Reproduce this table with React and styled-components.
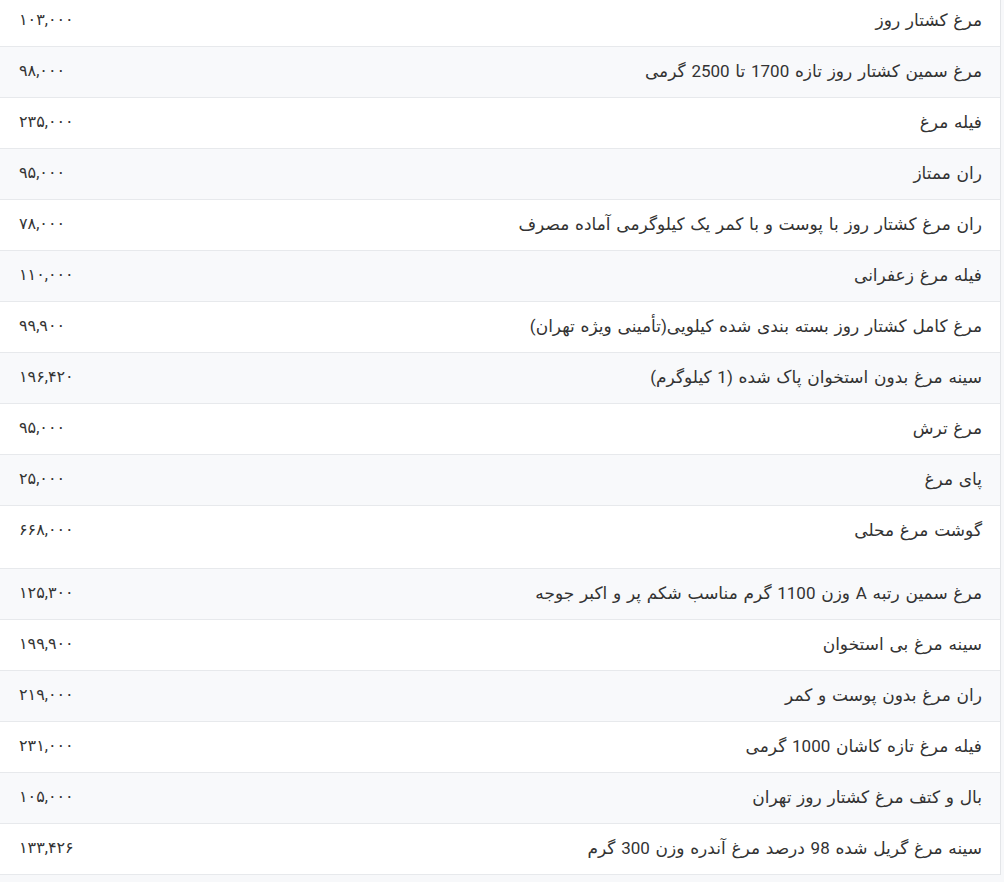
import React from "react";
import styled, { createGlobalStyle } from "styled-components";

const Global = createGlobalStyle`
  html, body { margin: 0; padding: 0; background: #f7f8fa; }
  body { font-family: Roboto, "DejaVu Sans", sans-serif; color: #333; overflow: hidden; }
`;

const Table = styled.div`
  direction: rtl;
  width: 1000px;
  margin-top: -4px;
  border-right: 1px solid #e3e5e8;
  background: #fff;
`;

const Row = styled.div`
  display: flex;
  justify-content: space-between;
  align-items: flex-start;
  height: ${(p) => (p.$tall ? 62 : 50)}px;
  padding: 0 18px 0 19px;
  box-sizing: content-box;
  border-bottom: 1px solid #e7e9ec;
  background: ${(p) => (p.$alt ? "#f8f9fb" : "#fff")};
`;

const Name = styled.span`
  font-size: 17px;
  line-height: 22px;
  word-spacing: 1.5px;
  margin-top: 13px;
  white-space: nowrap;
`;

const Price = styled.span`
  direction: ltr;
  font-size: 16px;
  line-height: 22px;
  margin-top: 13px;
  white-space: nowrap;
`;

const rows = [
  ["مرغ کشتار روز", "۱۰۳,۰۰۰"],
  ["مرغ سمین کشتار روز تازه 1700 تا 2500 گرمی", "۹۸,۰۰۰"],
  ["فیله مرغ", "۲۳۵,۰۰۰"],
  ["ران ممتاز", "۹۵,۰۰۰"],
  ["ران مرغ کشتار روز با پوست و با کمر یک کیلوگرمی آماده مصرف", "۷۸,۰۰۰"],
  ["فیله مرغ زعفرانی", "۱۱۰,۰۰۰"],
  ["مرغ کامل کشتار روز بسته بندی شده کیلویی(تأمینی ویژه تهران)", "۹۹,۹۰۰"],
  ["سینه مرغ بدون استخوان پاک شده (1 کیلوگرم)", "۱۹۶,۴۲۰"],
  ["مرغ ترش", "۹۵,۰۰۰"],
  ["پای مرغ", "۲۵,۰۰۰"],
  ["گوشت مرغ محلی", "۶۶۸,۰۰۰", true],
  ["مرغ سمین رتبه A وزن 1100 گرم مناسب شکم پر و اکبر جوجه", "۱۲۵,۳۰۰"],
  ["سینه مرغ بی استخوان", "۱۹۹,۹۰۰"],
  ["ران مرغ بدون پوست و کمر", "۲۱۹,۰۰۰"],
  ["فیله مرغ تازه کاشان 1000 گرمی", "۲۳۱,۰۰۰"],
  ["بال و کتف مرغ کشتار روز تهران", "۱۰۵,۰۰۰"],
  ["سینه مرغ گریل شده 98 درصد مرغ آندره وزن 300 گرم", "۱۳۳,۴۲۶"],
];

export default function App() {
  return (
    <>
      <Global />
      <Table>
        {rows.map(([name, price, tall], i) => (
          <Row key={i} $alt={i % 2 === 1} $tall={tall}>
            <Name>{name}</Name>
            <Price>{price}</Price>
          </Row>
        ))}
      </Table>
    </>
  );
}
